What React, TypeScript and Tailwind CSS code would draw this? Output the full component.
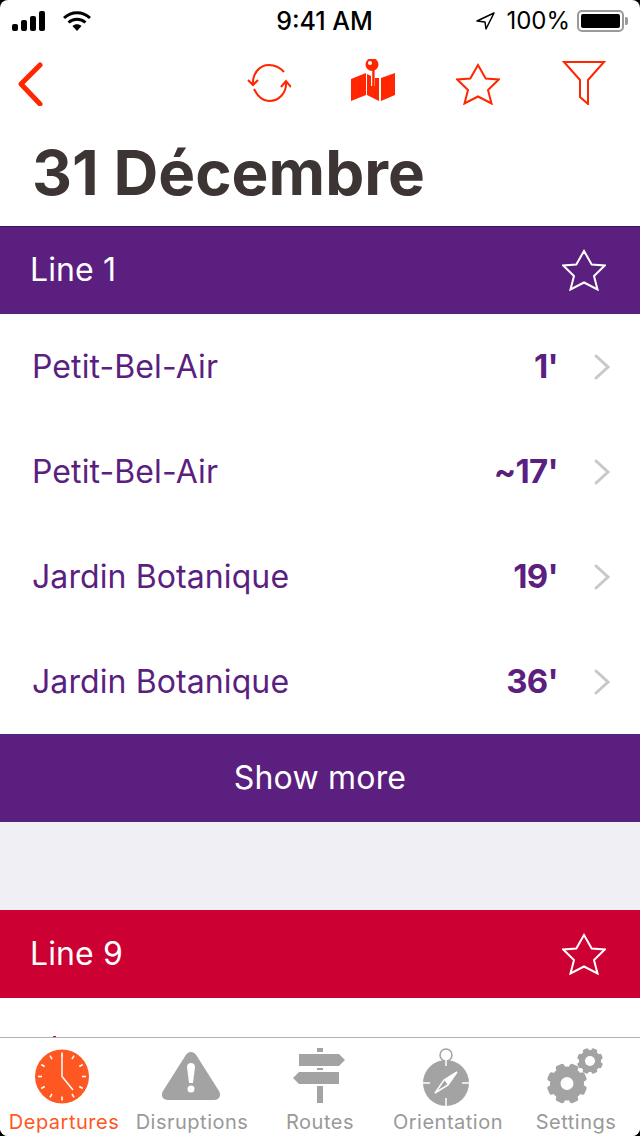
import React from 'react';

const font = { fontFamily: 'Inter, "Liberation Sans", sans-serif' };

const StarIcon: React.FC<{ className?: string }> = ({ className }) => (
  <svg viewBox="0 0 44 42" fill="none" stroke="currentColor" strokeWidth="2" className={className}>
    <path d="M22 2l7.700 13.500 13 1-10.700 10.500 3.500 13.500-13.500-7-13.500 7 3.500-13.500L1.300 16.500l13-1z" />
  </svg>
);

const Bars = () => (
  <div className="flex items-end gap-[3px]">
    <div className="w-[6px] h-[7px] bg-black rounded-[2px]" />
    <div className="w-[6px] h-[11px] bg-black rounded-[2px]" />
    <div className="w-[6px] h-[15px] bg-black rounded-[2px]" />
    <div className="w-[6px] h-[20px] bg-black rounded-[2px]" />
  </div>
);

const StatusBar = () => (
  <div className="h-[40px] grid grid-cols-3 items-center pl-[12px] pr-[12px] pt-[2px] text-black">
    <div className="flex items-center gap-[18px]">
      <Bars />
      <svg viewBox="0 0 28 20" className="w-[28px] h-[20px]" fill="none" stroke="black" strokeWidth="3">
        <path d="M1 7c7.500-7 18.500-7 26 0M5.500 11.500c5-4.500 12-4.500 17 0" />
        <path d="M9.500 15c2.500-2.200 6.500-2.200 9 0L14 20z" fill="black" stroke="none" />
      </svg>
    </div>
    <div className="text-[25px] leading-none font-medium text-center whitespace-nowrap pl-[9px]">9:41 AM</div>
    <div className="flex items-center justify-end gap-[11px]">
      <svg viewBox="0 0 19 18" className="w-[19px] h-[18px]" fill="none" stroke="black" strokeWidth="1.500">
        <path d="M18 1L1 9l8 1 1 7z" strokeLinejoin="round" />
      </svg>
      <div className="flex items-center gap-[7px]">
        <div className="text-[24px] leading-none">100%</div>
        <div className="flex items-center gap-[1px]">
          <div className="w-[47px] h-[22px] rounded-[5px] border-2 border-[#9a9a9a] p-[2px]">
            <div className="w-full h-full bg-black rounded-[2px]" />
          </div>
          <div className="w-[3px] h-[8px] bg-[#9a9a9a] rounded-r-[2px]" />
        </div>
      </div>
    </div>
  </div>
);

const TopBar = () => (
  <div className="h-[90px] flex items-start pl-[16px] pr-[34px] text-[#ff2600]">
    <svg viewBox="0 0 28 44" className="w-[28px] h-[44px] mt-[22px]" fill="none" stroke="currentColor" strokeWidth="5" strokeLinecap="round" strokeLinejoin="round">
      <path d="M24 3L5 22l19 20" />
    </svg>
    <div className="flex items-start ml-auto">
      <svg viewBox="0 0 44 40" className="w-[44px] h-[40px] mt-[23px]" fill="none" stroke="currentColor" strokeWidth="2">
        <path d="M6 22C5 10 13 2 22 2c6 0 11 2.500 15 7" />
        <path d="M39 18c1 12-7 20-17 20-6 0-11-4-15-12" />
        <path d="M1 17l5 5 5-5M34 24l5-6 5 6" />
      </svg>
      <svg viewBox="0 0 46 46" className="w-[46px] h-[46px] ml-[60px] mt-[19px]" fill="currentColor">
        <path d="M0 20l15-6v22L0 42z" />
        <path d="M16 15l4 2v10h4v-8l4 0v23l-12-6z" />
        <path d="M30 19l14-5v22l-14 6z" />
        <path d="M21.200 10h2.400v17h-2.400z" />
        <circle cx="21" cy="5.500" r="6.500" />
        <circle cx="19" cy="4" r="2" fill="white" />
      </svg>
      <StarIcon className="w-[44px] h-[42px] ml-[59px] mt-[23px]" />
      <svg viewBox="0 0 44 44" className="w-[44px] h-[44px] ml-[62px] mt-[21px]" fill="none" stroke="currentColor" strokeWidth="2">
        <path d="M2 1h40L26 19v24l-8-7V19z" />
      </svg>
    </div>
  </div>
);

const LineHeader: React.FC<{ name: string; color: string }> = ({ name, color }) => (
  <div className={`h-[88px] flex items-center justify-between pl-[30px] pr-[34px] ${color}`}>
    <span className="text-[32px] text-white tracking-[0.1px]">{name}</span>
    <StarIcon className="w-[44px] h-[42px] text-white" />
  </div>
);

const departures = [
  { dest: 'Petit-Bel-Air', time: "1'" },
  { dest: 'Petit-Bel-Air', time: "~17'" },
  { dest: 'Jardin Botanique', time: "19'" },
  { dest: 'Jardin Botanique', time: "36'" },
];

const tabs = [
  { label: 'Departures', icon: 'clock' },
  { label: 'Disruptions', icon: 'warn' },
  { label: 'Routes', icon: 'sign' },
  { label: 'Orientation', icon: 'compass' },
  { label: 'Settings', icon: 'gears' },
];

const Gear: React.FC<{ cx: number; cy: number; r: number; hole: number }> = ({ cx, cy, r, hole }) => (
  <g>
    {[0, 45, 90, 135].map((a) => (
      <rect key={a} x={cx - r * 0.27} y={cy - r * 1.18} width={r * 0.54} height={r * 2.36} rx={r * 0.14} transform={`rotate(${a + 22.5} ${cx} ${cy})`} />
    ))}
    <circle cx={cx} cy={cy} r={r} />
    <circle cx={cx} cy={cy} r={hole} fill="white" />
  </g>
);

const TabIcon: React.FC<{ icon: string }> = ({ icon }) => {
  if (icon === 'clock') {
    return (
      <svg viewBox="0 0 60 60" className="w-[60px] h-[60px]">
        <circle cx="28" cy="30.500" r="27" fill="#ff5722" />
        {Array.from({ length: 12 }).map((_, i) => (
          <rect key={i} x="27.200" y="6.500" width="1.600" height="4" fill="white" transform={`rotate(${i * 30} 28 30.500)`} />
        ))}
        <path d="M28 9v21.500l11 13.500" fill="none" stroke="white" strokeWidth="1.500" />
      </svg>
    );
  }
  if (icon === 'warn') {
    return (
      <svg viewBox="0 0 60 60" className="w-[60px] h-[60px]" fill="#a3a3a3">
        <path d="M29 6c2.500 0 4 1.300 5.500 3.500L57 45c2.500 4 .5 9-4.500 9H5.500c-5 0-7-5-4.500-9L23.500 9.500C25 7.300 26.500 6 29 6z" />
        <path d="M25 21c0-2.500 1.800-4 4-4s4 1.500 4 4l-2 16h-4z" fill="white" />
        <circle cx="29" cy="43" r="3.500" fill="white" />
      </svg>
    );
  }
  if (icon === 'sign') {
    return (
      <svg viewBox="0 0 60 60" className="w-[60px] h-[60px]" fill="#a3a3a3">
        <path d="M27 2h6v4h-6zM27 22h6v2h-6zM27 40h6v17h-6z" />
        <path d="M9 8h40l6 6-6 6H9z" />
        <path d="M9 26h40v12H9l-6-6z" />
      </svg>
    );
  }
  if (icon === 'compass') {
    return (
      <svg viewBox="0 0 60 60" className="w-[60px] h-[60px]" fill="#a3a3a3">
        <circle cx="28" cy="9" r="6" fill="none" stroke="#a3a3a3" strokeWidth="1.500" />
        <path d="M27.200 14h1.600v2h-1.600z" />
        <circle cx="28" cy="37" r="23" />
        <path d="M28 14v6M28 52v8M5 37h7M44 37h7" stroke="white" strokeWidth="1.500" />
        <path d="M39 26l-9 13-13 8 9-13z" fill="none" stroke="white" strokeWidth="1.500" />
        <path d="M39 26l-9 13-4-5z" fill="white" />
      </svg>
    );
  }
  return (
    <svg viewBox="0 0 60 60" className="w-[60px] h-[60px]" fill="#a3a3a3">
      <Gear cx={21} cy={37.500} r={17} hole={6.500} />
      <Gear cx={44} cy={15} r={11} hole={5} />
    </svg>
  );
};

const TabBar = () => (
  <div className="h-[99px] shrink-0 border-t border-[#b2b2b2] bg-white grid grid-cols-5 pt-[8px]">
    {tabs.map((t, i) => (
      <div key={t.label} className="flex flex-col items-center">
        <TabIcon icon={t.icon} />
        <span className={`text-[20px] leading-[24px] mt-[4px] tracking-[0.5px] whitespace-nowrap ${i === 0 ? 'text-[#ff5722]' : 'text-[#999999]'}`}>
          {t.label}
        </span>
      </div>
    ))}
  </div>
);

const App: React.FC = () => {
  return (
    <div className="w-[640px] h-[1136px] bg-black overflow-hidden" style={font}>
      <div className="w-full h-full bg-white rounded-[8px] overflow-hidden flex flex-col">
        <StatusBar />
        <TopBar />
        <div className="flex-1 overflow-hidden relative">
          <h1 className="h-[96px] pl-[32px] pt-[8px] text-[62px] leading-[70px] font-bold text-[#3d3533] whitespace-nowrap">31 Décembre</h1>
          <LineHeader name="Line 1" color="bg-[#5b1f80] shadow-[inset_0_1px_0_#3d1560]" />
          {departures.map((d, i) => (
            <div key={i} className="h-[105px] flex items-center pl-[32px] pr-[29px] text-[#5b1f80]">
              <span className="text-[32px] flex-1 tracking-[0.1px]">{d.dest}</span>
              <span className="text-[33px] font-bold tracking-[-0.7px]">{d.time}</span>
              <svg viewBox="0 0 18 28" className="w-[18px] h-[28px] ml-[35px]" fill="none" stroke="#c7c7cc" strokeWidth="3" strokeLinecap="round">
                <path d="M3 3l12 11L3 25" />
              </svg>
            </div>
          ))}
          <div className="h-[88px] bg-[#5b1f80] flex items-center justify-center text-[32px] text-white tracking-[0.2px]">Show more</div>
          <div className="h-[88px] bg-[#efeff4]" />
          <LineHeader name="Line 9" color="bg-[#cc0033]" />
          <div className="absolute left-[53px] bottom-0 w-[3px] h-[1px] bg-[#cc0033]" />
        </div>
        <TabBar />
      </div>
    </div>
  );
};

export default App;
